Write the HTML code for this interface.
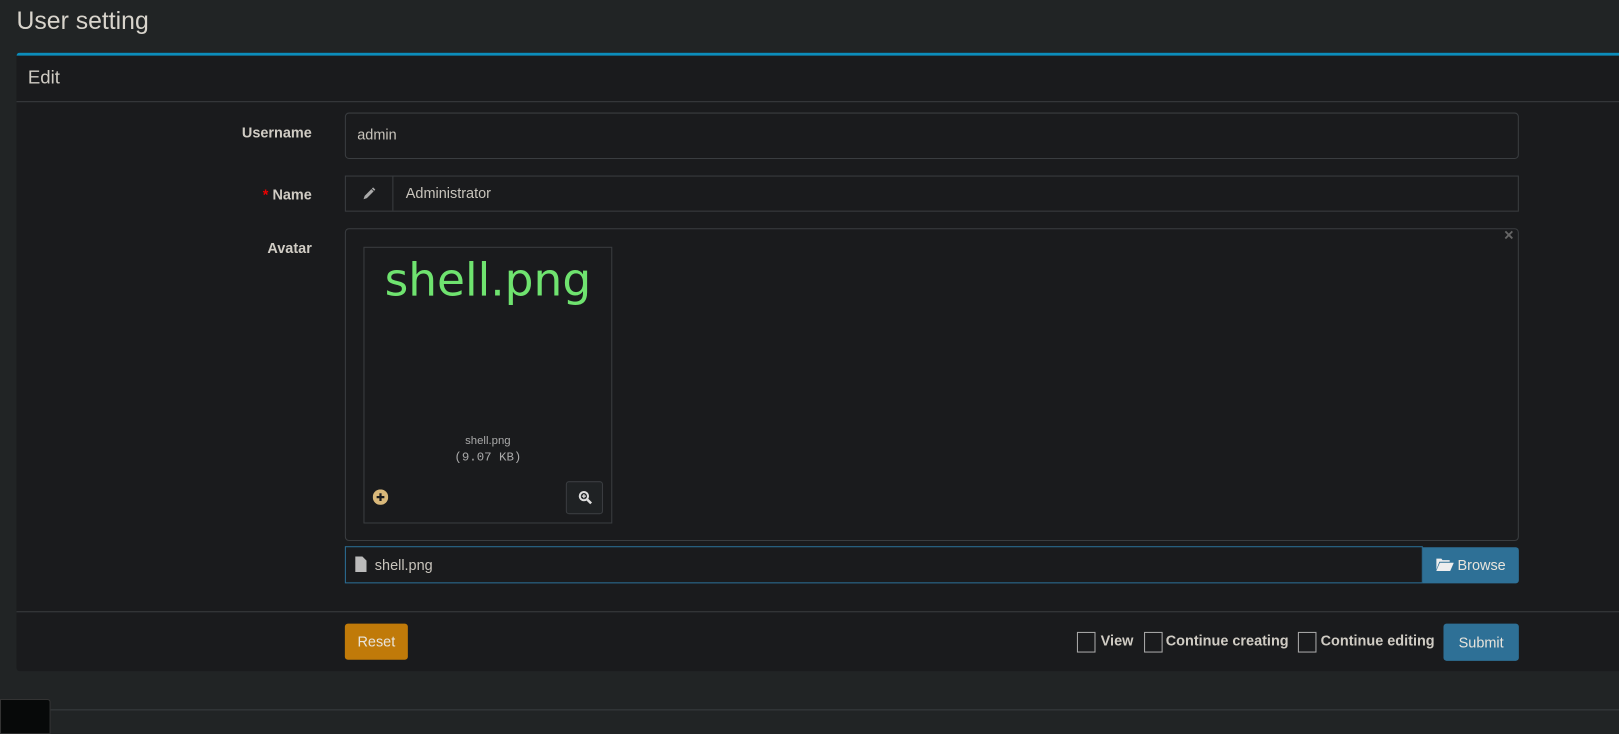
<!DOCTYPE html>
<html><head><meta charset="utf-8"><style>
*{box-sizing:border-box;margin:0;padding:0}
html,body{width:1619px;height:711px;overflow:hidden;background:#212425}
#w{position:absolute;left:0;top:0;width:1568px;height:689px;transform:scale(1.03253);transform-origin:0 0;font-family:"Liberation Sans",sans-serif;color:#d0ccc4}
.title{position:absolute;left:16px;top:7px;font-size:24px;color:#d8d4cc}
.box{position:absolute;left:16px;top:51px;width:1552px;height:599px;background:#1a1b1d;border-top:3px solid #0c8dbb;border-radius:3px 0 0 3px}
.hdr{height:45px;border-bottom:1px solid #3a3d40;padding:11px 11px;font-size:18px;color:#d0ccc4}
.lbl{position:absolute;width:286px;text-align:right;font-weight:bold;font-size:14px;color:#d0ccc4}
.inp{position:absolute;border:1px solid #3a3d40;border-radius:4px;font-size:14px;color:#c8c4bc}
.foot{position:absolute;left:0;top:538px;width:1552px;border-top:1px solid #3a3d40}
.btn{position:absolute;border-radius:3px;font-size:14px;color:#e8e4dc;text-align:center}
.cb{position:absolute;width:18px;height:20px;border:1px solid #aaa;background:#1a1b1d}
.cl{position:absolute;font-weight:bold;font-size:14px;color:#d0ccc4}
</style></head><body><div id="w">
<div class="title">User setting</div>
<div class="box">
<div class="hdr">Edit</div>
<div class="lbl" style="left:0;top:66px">Username</div>
<div class="inp" style="left:318px;top:55px;width:1137px;height:45px;padding:12px 11px">admin</div>
<div class="lbl" style="left:0;top:126px"><span style="color:#e00">*</span> Name</div>
<div class="inp" style="left:318px;top:116px;width:1137px;height:35px;border-radius:0">
 <div style="position:absolute;left:0;top:0;width:46px;height:33px;border-right:1px solid #3a3d40"><svg style="position:absolute;left:16px;top:10px" width="13" height="13" viewBox="0 0 12 12"><path d="M1 11 L2 8 L8 2 L10 4 L4 10 Z" fill="#aaa"/><path d="M9 1 L11 3" stroke="#aaa" stroke-width="1.5"/></svg></div>
 <span style="position:absolute;left:58px;top:8px">Administrator</span>
</div>
<div class="lbl" style="left:0;top:178px">Avatar</div>
<div class="inp" style="left:318px;top:167px;width:1137px;height:303px">
 <span style="position:absolute;right:4px;top:-2px;color:#666;font-size:16px;font-weight:bold">×</span>
 <div style="position:absolute;left:17px;top:17px;width:241px;height:268px;border:1px solid #3a3d40">
  <div style="position:absolute;left:0;top:6px;width:239px;text-align:center;font-family:'DejaVu Sans',sans-serif;font-size:44px;color:#6fe36f">shell.png</div>
  <div style="position:absolute;left:0;top:181px;width:239px;text-align:center;font-size:11px;color:#aaa">shell.png</div>
  <div style="position:absolute;left:0;top:196px;width:239px;text-align:center;font-size:12px;font-family:'Liberation Mono',monospace;color:#aaa">(9.07 KB)</div>
  <svg style="position:absolute;left:8px;top:234px" width="15" height="15" viewBox="0 0 14 14"><circle cx="7" cy="7" r="7" fill="#d9b87a"/><path d="M7 3.5V10.5M3.5 7H10.5" stroke="#1a1b1d" stroke-width="2"/></svg>
  <div style="position:absolute;left:195px;top:226px;width:36px;height:32px;border:1px solid #3a3d40;border-radius:3px;background:#1f2224"><svg style="position:absolute;left:11px;top:8px" width="14" height="14" viewBox="0 0 14 14"><circle cx="5.5" cy="5.5" r="4" stroke="#ddd" stroke-width="2" fill="none"/><path d="M8.5 8.5L12.5 12.5" stroke="#ddd" stroke-width="2.5"/><path d="M5.5 3.5V7.5M3.5 5.5H7.5" stroke="#ddd" stroke-width="1.3"/></svg></div>
 </div>
</div>
<div style="position:absolute;left:318px;top:475px;width:1044px;height:36px;border:1px solid #2b6f96;">
 <svg style="position:absolute;left:9px;top:9px" width="11" height="15" viewBox="0 0 11 15"><path d="M0 0H7L11 4V15H0Z" fill="#bbb"/></svg>
 <span style="position:absolute;left:28px;top:9px;font-size:14px;color:#c8c4bc">shell.png</span>
</div>
<div class="btn" style="left:1362px;top:476px;width:93px;height:35px;background:#2e7096;border-radius:0 3px 3px 0;padding-top:9px"><svg width="17" height="13" viewBox="0 0 17 13" style="vertical-align:-1px"><path d="M0 1H5L6 2.5H13V4H3L0 12Z" fill="#eee"/><path d="M3.5 5H17L13.5 13H0Z" fill="#eee"/></svg> Browse</div>
<div class="foot"></div>
<div class="btn" style="left:318px;top:550px;width:61px;height:35px;background:#c07a09;padding-top:9px">Reset</div>
<div class="cb" style="left:1027px;top:558px"></div><div class="cl" style="left:1050px;top:558px">View</div>
<div class="cb" style="left:1092px;top:558px"></div><div class="cl" style="left:1113px;top:558px">Continue creating</div>
<div class="cb" style="left:1241px;top:558px"></div><div class="cl" style="left:1263px;top:558px">Continue editing</div>
<div class="btn" style="left:1382px;top:550px;width:73px;height:36px;background:#2e7096;padding-top:10px">Submit</div>
</div>
<div style="position:absolute;left:0;top:677px;width:49px;height:34px;background:#070909;border:1px solid #333;border-radius:0 3px 0 0"></div>
<div style="position:absolute;left:49px;top:687px;width:1519px;height:1px;background:#3a3d40"></div>
</div></body></html>
